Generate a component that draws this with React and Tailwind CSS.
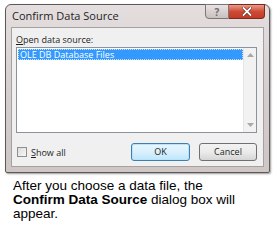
export default function App() {
  return (
    <div className="w-[279px] h-[234px] bg-white overflow-hidden pt-[4px]">
      {/* dialog window */}
      <div className="ml-[5px] w-[265px] h-[169px] flex flex-col rounded-t-[6px] rounded-b-[2px] border border-[#5e5858] bg-gradient-to-b from-[#e4dede] via-[#d6cfcf] to-[#cfc6c6] shadow-[1px_1px_2px_rgba(0,0,0,0.4)]">
        <div className="h-[22px] flex items-start justify-between pl-[6px] pr-[4px] shrink-0">
          <span
            className="text-[11px] text-[#1e1e1e] mt-[5px] leading-none"
            style={{ fontFamily: '"Open Sans", "Noto Sans", sans-serif' }}
          >
            Confirm Data Source
          </span>
          <div className="flex -mt-px">
            <div className="w-[24px] h-[15px] flex items-center justify-center rounded-bl-[4px] border border-[#7d7676] bg-gradient-to-b from-[#e8e3e3] to-[#c9c0c0] text-[10px] font-bold text-[#6c6c6c] leading-none">
              ?
            </div>
            <div className="w-[36px] h-[15px] flex items-center justify-center rounded-br-[4px] border border-l-0 border-[#7a2a20] bg-gradient-to-b from-[#e79a8a] via-[#cf4a35] to-[#c13d28]">
              <svg width="10" height="9" viewBox="0 0 10 9">
                <path d="M1.5 1 L8.5 8 M8.5 1 L1.5 8" stroke="#5a1a12" strokeWidth="3" strokeLinecap="square" />
                <path d="M1.5 1 L8.5 8 M8.5 1 L1.5 8" stroke="#ffffff" strokeWidth="1.8" strokeLinecap="square" />
              </svg>
            </div>
          </div>
        </div>

        {/* client area */}
        <div
          className="flex-1 mx-[5px] mb-[5px] border border-[#a7a0a0] bg-[#f0f0f0] flex flex-col pl-[4px] pr-[6px]"
          style={{ fontFamily: '"Open Sans", "Noto Sans", sans-serif' }}
        >
          <div className="text-[9px] text-[#1e1e1e] leading-none mt-[7px]">
            <span className="underline">O</span>pen data source:
          </div>
          <div className="mt-[3px] h-[86px] border border-[#8d939b] bg-white flex">
            <div className="flex-1 pl-px pt-px">
              <div className="h-[11px] bg-[#3399ff] border border-dotted border-[#c9e3ff] text-white text-[9px] leading-[9px] pl-[1px]">
                OLE DB Database Files
              </div>
            </div>
            <div className="w-[13px] bg-[#f2f2f2] border-l border-[#e6e6e6] flex flex-col justify-between items-center py-[5px]">
              <svg width="7" height="4" viewBox="0 0 7 4">
                <path d="M0 4 L3.5 0 L7 4 Z" fill="#a8a8a8" />
              </svg>
              <svg width="7" height="4" viewBox="0 0 7 4">
                <path d="M0 0 L3.5 4 L7 0 Z" fill="#a8a8a8" />
              </svg>
            </div>
          </div>
          <div className="flex items-center mt-[10px]">
            <div className="w-[10px] h-[10px] border border-[#8e8f8f] bg-gradient-to-br from-[#dcdcdc] to-[#f8f8f8] ml-px" />
            <span className="text-[9px] text-[#1e1e1e] ml-[4px] leading-none">
              <span className="underline">S</span>how all
            </span>
            <div className="ml-auto flex gap-[9px]">
              <div className="w-[59px] h-[18px] rounded-[3px] border border-[#3c7fb1] bg-gradient-to-b from-[#eaf6fd] via-[#d9f0fc] to-[#bee6fd] flex items-center justify-center text-[9px] text-[#1e1e1e] shadow-[inset_0_0_0_1px_#b8e4fa]">
                OK
              </div>
              <div className="w-[58px] h-[18px] rounded-[3px] border border-[#707070] bg-gradient-to-b from-[#f2f2f2] via-[#ebebeb] to-[#d5d5d5] flex items-center justify-center text-[9px] text-[#1e1e1e]">
                Cancel
              </div>
            </div>
          </div>
        </div>
      </div>

      <p
        className="mt-[6px] ml-[13px] text-[13.5px] leading-[14px] text-black"
        style={{ fontFamily: '"Liberation Sans", Arial, sans-serif' }}
      >
        After you choose a data file, the
        <br />
        <b>Confirm Data Source</b> dialog box will
        <br />
        appear.
      </p>
    </div>
  );
}
